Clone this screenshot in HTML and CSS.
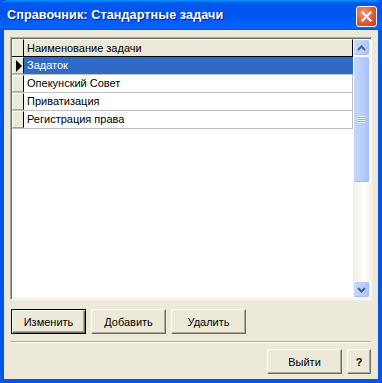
FILE: index.html
```html
<!DOCTYPE html>
<html lang="ru">

<head>
  <meta charset="UTF-8">
  <title>Справочник: Стандартные задачи</title>
  <link rel="stylesheet" href="styles.css">
</head>

<body>
  <div class="window">
    <div class="titlebar">
      <span class="title">Справочник: Стандартные задачи</span>
      <button class="close" title="Закрыть">
        <svg width="11" height="11" viewBox="0 0 11 11">
          <path d="M1.5 1.5 L9.5 9.5 M9.5 1.5 L1.5 9.5" stroke="#fff" stroke-width="2.2" stroke-linecap="square" />
        </svg>
      </button>
    </div>

    <div class="content">
      <div class="grid">
        <div class="table">
          <div class="row head">
            <div class="ind"></div>
            <div class="cell">Наименование задачи</div>
          </div>
          <div class="row selected">
            <div class="ind"><span class="arrow"></span></div>
            <div class="cell">Задаток</div>
          </div>
          <div class="row">
            <div class="ind"></div>
            <div class="cell">Опекунский Совет</div>
          </div>
          <div class="row">
            <div class="ind"></div>
            <div class="cell">Приватизация</div>
          </div>
          <div class="row">
            <div class="ind"></div>
            <div class="cell">Регистрация права</div>
          </div>
        </div>

        <div class="scrollbar">
          <div class="sb-btn">
            <svg width="9" height="6" viewBox="0 0 9 6">
              <path d="M1 5 L4.5 1.5 L8 5" fill="none" stroke="#4d6185" stroke-width="2" />
            </svg>
          </div>
          <div class="track">
            <div class="thumb">
              <span class="grip"></span>
            </div>
          </div>
          <div class="sb-btn">
            <svg width="9" height="6" viewBox="0 0 9 6">
              <path d="M1 1 L4.5 4.5 L8 1" fill="none" stroke="#4d6185" stroke-width="2" />
            </svg>
          </div>
        </div>
      </div>

      <div class="actions">
        <button class="btn default">Изменить</button>
        <button class="btn">Добавить</button>
        <button class="btn">Удалить</button>
      </div>

      <div class="separator"></div>

      <div class="footer">
        <button class="btn">Выйти</button>
        <button class="btn help">?</button>
      </div>
    </div>
  </div>
</body>

</html>
```

FILE: styles.css
```css
html,
body {
  margin: 0;
  padding: 0;
  background: #fff;
}

.window {
  width: 382px;
  height: 383px;
  display: flex;
  flex-direction: column;
  box-sizing: border-box;
  background: #0055ea;
  font-family: "Liberation Sans", Arial, sans-serif;
  font-size: 11px;
  color: #000;
}

.titlebar {
  height: 30px;
  flex: none;
  display: flex;
  align-items: center;
  justify-content: space-between;
  padding: 0 5px 0 7px;
  border-radius: 7px 7px 0 0;
  background: linear-gradient(#0997ff 0%, #0058ee 10%, #0053ee 45%, #0062fb 85%, #0066ff 92%, #0050e8 100%);
}

.title {
  color: #fff;
  font-weight: bold;
  font-size: 12.6px;
  text-shadow: 1px 1px 0 #0a1e8c;
  letter-spacing: 0.1px;
}

.close {
  width: 21px;
  height: 21px;
  padding: 0;
  display: flex;
  align-items: center;
  justify-content: center;
  border: 1px solid #fff;
  border-radius: 3px;
  background: radial-gradient(circle at 35% 30%, #f0967a 0%, #e2593a 55%, #c5381c 100%);
  margin-top: 2px;
}

.content {
  flex: 1;
  display: flex;
  flex-direction: column;
  background: #ece9d8;
  margin: 0 4px 4px 4px;
  padding: 7px 6px 0 6px;
}

.grid {
  height: 263px;
  box-sizing: border-box;
  display: flex;
  border: 1px solid;
  border-color: #aca899 #fff #fff #aca899;
  box-shadow: inset 1px 1px 0 #716f64, inset -1px -1px 0 #f1efe2;
  padding: 1px;
  background: #fff;
}

.table {
  flex: 1;
}

.row {
  height: 18px;
  display: flex;
  border-bottom: 1px solid #c0c0c0;
  box-sizing: border-box;
}

.row.head {
  height: 18px;
  background: #ece9d8;
  border-bottom: 1px solid #000;
}

.ind {
  width: 12px;
  flex: none;
  box-sizing: border-box;
  background: #ece9d8;
  border-top: 1px solid #fff;
  border-left: 1px solid #fff;
  border-right: 1px solid #000;
  display: flex;
  align-items: center;
  justify-content: center;
}

.row .ind {
  border-bottom: 1px solid #aca899;
}

.row.head .ind {
  border-bottom: none;
}

.cell {
  flex: 1;
  padding-left: 3px;
  line-height: 17px;
  white-space: nowrap;
  border-right: 1px solid #c0c0c0;
}

.row.head .cell {
  border-top: 1px solid #fff;
  border-right: 1px solid #000;
  line-height: 16px;
}

.row.selected {
  background: #316ac5;
  color: #fff;
}

.row.selected .cell {
  border-right-color: #316ac5;
}

.arrow {
  width: 0;
  height: 0;
  border-top: 6px solid transparent;
  border-bottom: 6px solid transparent;
  border-left: 6px solid #000;
  margin-left: 1px;
}

.scrollbar {
  width: 17px;
  flex: none;
  display: flex;
  flex-direction: column;
  background: linear-gradient(90deg, #eeede5, #fefefb 70%, #f4f3ee);
}

.sb-btn,
.thumb {
  box-sizing: border-box;
  border: 1px solid #fff;
  border-radius: 2px;
  background: linear-gradient(90deg, #c6d7fc, #b7cdfc 60%, #a9c1f8);
  box-shadow: inset -1px -1px 0 #a3bbf0;
  display: flex;
  align-items: center;
  justify-content: center;
}

.sb-btn {
  height: 17px;
  flex: none;
}

.track {
  flex: 1;
  display: flex;
  flex-direction: column;
}

.thumb {
  height: 127px;
}

.grip {
  width: 7px;
  height: 7px;
  background: repeating-linear-gradient(#eef4fe 0 1px, #8cb0f8 1px 2px);
}

.actions {
  display: flex;
  gap: 5px;
  margin: 9px 0 0 1px;
}

.btn {
  width: 75px;
  height: 25px;
  padding: 0;
  box-sizing: border-box;
  font-family: "Liberation Sans", Arial, sans-serif;
  font-size: 11px;
  color: #000;
  background: #ece9d8;
  border: 1px solid;
  border-color: #fff #716f64 #716f64 #fff;
  box-shadow: inset -1px -1px 0 #aca899;
}

.btn.default {
  border: 1px solid #000;
  box-shadow: inset 1px 1px 0 #fff, inset -1px -1px 0 #716f64, inset -2px -2px 0 #aca899;
}

.btn.help {
  width: 24px;
  font-weight: bold;
}

.separator {
  height: 2px;
  margin: 7px 1px 0 1px;
  border-top: 1px solid #aca899;
  border-bottom: 1px solid #fff;
  box-sizing: border-box;
}

.footer {
  display: flex;
  justify-content: flex-end;
  gap: 5px;
  margin: 6px 1px 0 0;
}
```
